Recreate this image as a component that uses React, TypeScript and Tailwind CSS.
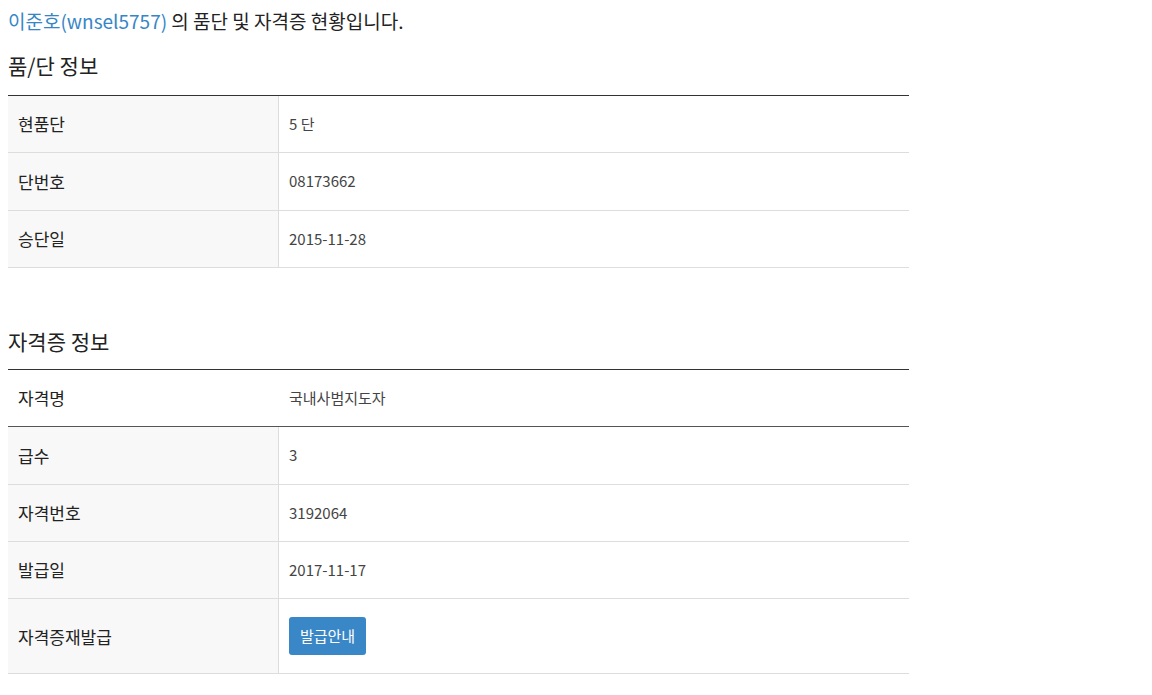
import React from "react";

const font = { fontFamily: '"Noto Sans CJK KR", "Noto Sans", sans-serif' };

function Row({ label, children, tall }: { label: string; children: React.ReactNode; tall?: boolean }) {
  return (
    <div className={`grid grid-cols-[271px_1fr] border-b border-[#dddddd] ${tall ? "h-[75px]" : "h-[57.33px]"}`}>
      <div className="flex items-center bg-[#f8f8f8] border-r border-[#dddddd] pl-[10px] text-[17px] text-[#222222]">{label}</div>
      <div className="flex items-center pl-[10px] text-[15px] text-[#444444]">{children}</div>
    </div>
  );
}

export default function App() {
  return (
    <div className="bg-white w-[1152px] h-[695px] px-[8px] pt-[6px]" style={font}>
      <p className="text-[19px] leading-[30px] text-[#222222]">
        <span className="text-[#3686c6]">이준호(wnsel5757)</span> 의 품단 및 자격증 현황입니다.
      </p>
      <h2 className="mt-[14px] text-[21px] leading-[30px] text-[#222222]">품/단 정보</h2>
      <div className="w-[901px] mt-[15px] border-t border-[#333333]">
        <Row label="현품단">5 단</Row>
        <Row label="단번호">08173662</Row>
        <Row label="승단일">2015-11-28</Row>
      </div>
      <h2 className="mt-[58px] text-[21px] leading-[30px] text-[#222222]">자격증 정보</h2>
      <div className="w-[901px] mt-[13px] border-t border-[#333333]">
        <div className="grid grid-cols-[271px_1fr] h-[57.33px] border-b border-[#555555]">
          <div className="flex items-center pl-[10px] text-[17px] text-[#222222]">자격명</div>
          <div className="flex items-center pl-[10px] text-[15px] text-[#444444]">국내사범지도자</div>
        </div>
        <Row label="급수">3</Row>
        <Row label="자격번호">3192064</Row>
        <Row label="발급일">2017-11-17</Row>
        <Row label="자격증재발급" tall>
          <button className="h-[38px] w-[77px] rounded-[3px] bg-[#3a87c8] text-white text-[15px]">발급안내</button>
        </Row>
      </div>
    </div>
  );
}
